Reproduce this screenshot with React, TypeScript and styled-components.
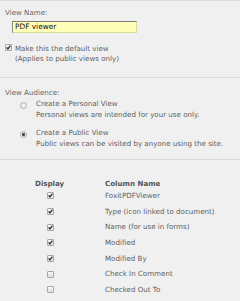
import React from "react";
import styled, { createGlobalStyle } from "styled-components";

const GlobalStyle = createGlobalStyle`
  html, body {
    margin: 0;
    padding: 0;
    background: #f0f0f0;
  }
  body {
    font-family: "DejaVu Sans", Verdana, sans-serif;
    font-size: 7.1px;
    color: #5e5e5e;
  }
`;

const Page = styled.div`
  width: 240px;
  height: 301px;
  overflow: hidden;
  border-top: 1px solid #dcdcdc;
  box-sizing: border-box;
`;

const Section = styled.section<{ $pad: string }>`
  padding: ${(p) => p.$pad};
  border-bottom: 1px solid #dadada;
  &:last-child {
    border-bottom: none;
  }
`;

const Label = styled.div`
  line-height: 10px;
  padding-left: 5px;
  color: #666;
`;

const NameInput = styled.div`
  margin: 3px 0 0 12px;
  width: 125px;
  height: 12px;
  box-sizing: border-box;
  background: #ffffb8;
  border: 1px solid #dada9a;
  border-top-color: #777;
  border-left-color: #888;
  color: #111;
  line-height: 10px;
  padding-left: 2px;
  font-size: 7.4px;
`;

const CheckRow = styled.div`
  display: flex;
  align-items: flex-start;
  gap: 3px;
  padding-left: 5px;
  margin-top: 11px;
`;

const Box = styled.span<{ $on?: boolean }>`
  flex: none;
  display: inline-flex;
  align-items: center;
  justify-content: center;
  width: 7px;
  height: 7px;
  box-sizing: border-box;
  border: 1px solid #a8a8a8;
  background: linear-gradient(#fafafa, #dcdcdc);
  border-radius: 1px;
  svg {
    display: ${(p) => (p.$on ? "block" : "none")};
  }
`;

const Lines = styled.div`
  line-height: 9.5px;
`;

const Radios = styled.div`
  display: flex;
  flex-direction: column;
  gap: 8px;
  margin-top: 1px;
`;

const RadioRow = styled.div`
  display: flex;
  align-items: flex-start;
  padding-left: 20px;
  gap: 9px;
`;

const Radio = styled.span<{ $on?: boolean }>`
  flex: none;
  margin-top: 2.5px;
  width: 7px;
  height: 7px;
  box-sizing: border-box;
  border-radius: 50%;
  border: 1px solid #b0b0b0;
  background: ${(p) =>
    p.$on
      ? "radial-gradient(circle, #444 0 1.3px, #e4e4e4 1.6px)"
      : "radial-gradient(circle, #f8f8f8, #dedede)"};
`;

const RadioText = styled.div`
  line-height: 10.5px;
`;

const Grid = styled.div`
  display: grid;
  grid-template-columns: 70px 1fr;
  padding-left: 35px;
`;

const Head = styled.div`
  font-weight: bold;
  color: #555;
  line-height: 11px;
  height: 10px;
`;

const Cell = styled.div<{ $center?: boolean }>`
  height: 15.7px;
  display: flex;
  align-items: center;
  padding-left: ${(p) => (p.$center ? "12px" : "0")};
  line-height: 10px;
`;

const Tick = () => (
  <svg width="5" height="5" viewBox="0 0 5 5">
    <path d="M0.6 2.4 L1.9 3.9 L4.4 0.6" fill="none" stroke="#222" strokeWidth="1.2" />
  </svg>
);

const columns: [string, boolean][] = [
  ["FoxitPDFViewer", true],
  ["Type (icon linked to document)", true],
  ["Name (for use in forms)", true],
  ["Modified", true],
  ["Modified By", true],
  ["Check In Comment", false],
  ["Checked Out To", false],
];

export default function App() {
  return (
    <Page>
      <GlobalStyle />
      <Section $pad="7px 0 14px 0">
        <Label>View Name:</Label>
        <NameInput>PDF viewer</NameInput>
        <CheckRow>
          <Box $on>
            <Tick />
          </Box>
          <Lines>
            Make this the default view
            <br />
            (Applies to public views only)
          </Lines>
        </CheckRow>
      </Section>
      <Section $pad="10px 0 10px 0">
        <Label>View Audience:</Label>
        <Radios>
          <RadioRow>
            <Radio />
            <RadioText>
              Create a Personal View
              <br />
              Personal views are intended for your use only.
            </RadioText>
          </RadioRow>
          <RadioRow>
            <Radio $on />
            <RadioText>
              Create a Public View
              <br />
              Public views can be visited by anyone using the site.
            </RadioText>
          </RadioRow>
        </Radios>
      </Section>
      <Section $pad="18px 0 0 0">
        <Grid>
          <Head>Display</Head>
          <Head>Column Name</Head>
          {columns.map(([name, on]) => (
            <React.Fragment key={name}>
              <Cell $center>
                <Box $on={on}>
                  <Tick />
                </Box>
              </Cell>
              <Cell>{name}</Cell>
            </React.Fragment>
          ))}
        </Grid>
      </Section>
    </Page>
  );
}
